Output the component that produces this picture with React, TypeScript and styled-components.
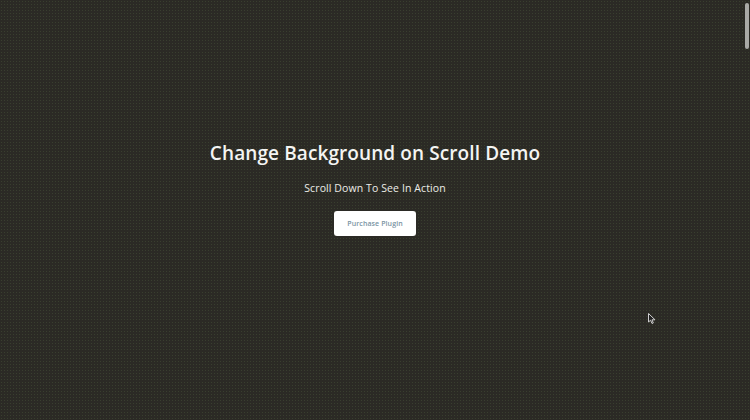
import * as React from "react";
import styled, { createGlobalStyle } from "styled-components";

const Global = createGlobalStyle`
    html, body {
        margin: 0;
        padding: 0;
        height: 100%;
        overflow: hidden;
    }
    body {
        background: #2b2a25;
        font-family: "Open Sans", "Liberation Sans", sans-serif;
    }
`;

const Page = styled.main`
    position: relative;
    width: 750px;
    height: 420px;
    background-color: #2b2a25;
    background-image: radial-gradient(rgba(70, 80, 55, 0.55) 0.6px, transparent 0.9px);
    background-size: 3px 3px;
    display: flex;
    flex-direction: column;
    align-items: center;
    padding-top: 139px;
    box-sizing: border-box;
`;

const Title = styled.h1`
    margin: 0;
    font-family: "Open Sans", "Liberation Sans", sans-serif;
    font-weight: 600;
    font-size: 19px;
    line-height: 28px;
    letter-spacing: 0.1px;
    color: #f4f4f2;
`;

const Subtitle = styled.p`
    margin: 14px 0 0;
    font-size: 10.5px;
    font-weight: 500;
    line-height: 14px;
    letter-spacing: 0.1px;
    color: #ecece8;
`;

const PurchaseButton = styled.button`
    margin-top: 16px;
    width: 82px;
    height: 25px;
    border: none;
    border-radius: 3px;
    background: #ffffff;
    color: #7a93a3;
    font-family: "Open Sans", "Liberation Sans", sans-serif;
    font-size: 7px;
    font-weight: 600;
    letter-spacing: 0.1px;
    cursor: pointer;
`;

const ScrollThumb = styled.div`
    position: absolute;
    top: 3px;
    right: 1px;
    width: 4px;
    height: 46px;
    border-radius: 2px;
    background: #a9a9a6;
`;

const Cursor = styled.svg`
    position: absolute;
    left: 648px;
    top: 313px;
`;

export default function App() {
    return (
        <>
            <Global />
            <Page>
                <Title>Change Background on Scroll Demo</Title>
                <Subtitle>Scroll Down To See In Action</Subtitle>
                <PurchaseButton>Purchase Plugin</PurchaseButton>
                <ScrollThumb />
                <Cursor width="8" height="12" viewBox="0 0 8 12">
                    <path d="M0.5 0.5 L0.5 9 L2.6 7.2 L4 10.5 L5.3 10 L4 6.8 L7 6.8 Z" fill="#222" stroke="#cfcfcf" strokeWidth="1" />
                </Cursor>
            </Page>
        </>
    );
}
